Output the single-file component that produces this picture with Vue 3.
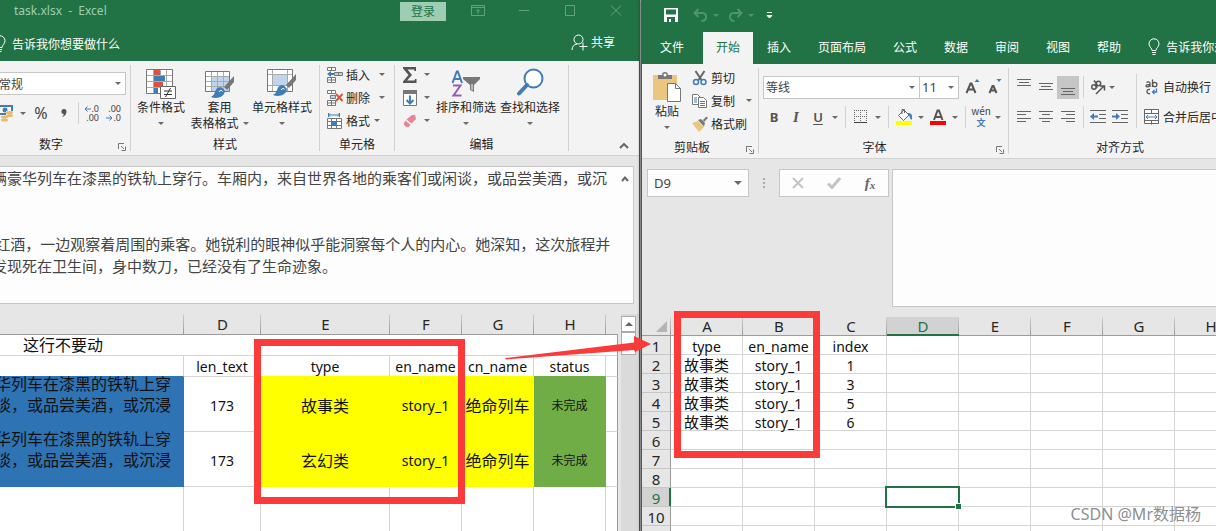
<script setup>
const formulaText = [
  '辆豪华列车在漆黑的铁轨上穿行。车厢内，来自世界各地的乘客们或闲谈，或品尝美酒，或沉',
  '',
  '',
  ' 红酒，一边观察着周围的乘客。她锐利的眼神似乎能洞察每个人的内心。她深知，这次旅程并',
  '发现死在卫生间，身中数刀，已经没有了生命迹象。',
].join('\n')

const tasks = [
  { len: 173, type: '故事类', en: 'story_1', cn: '绝命列车', status: '未完成' },
  { len: 173, type: '玄幻类', en: 'story_1', cn: '绝命列车', status: '未完成' },
]

const tabs = ['文件', '开始', '插入', '页面布局', '公式', '数据', '审阅', '视图', '帮助']
const columns = ['A', 'B', 'C', 'D', 'E', 'F', 'G', 'H', 'I']
const cells = {
  1: ['type', 'en_name', 'index'],
  2: ['故事类', 'story_1', '1'],
  3: ['故事类', 'story_1', '3'],
  4: ['故事类', 'story_1', '5'],
  5: ['故事类', 'story_1', '6'],
}
</script>

<template>
  <main class="desktop">
    <section class="window source">
      <header class="head">
        <div class="titlebar">
          <span class="doc">task.xlsx&nbsp; -&nbsp; Excel</span>
          <button class="login">登录</button>
          <button class="wbtn" aria-label="功能区显示选项">
            <svg width="14" height="12" viewBox="0 0 14 12"><path d="M.5 .5h13v10h-13zM.5 2.500h13M7 9V4.500M5 6.500l2-2 2 2" /></svg>
          </button>
          <button class="wbtn" aria-label="最小化">
            <svg width="14" height="12" viewBox="0 0 14 12"><path d="M2 5.500h10" /></svg>
          </button>
          <button class="wbtn" aria-label="最大化">
            <svg width="14" height="12" viewBox="0 0 14 12"><path d="M2.500 .5h9v10h-9z" /></svg>
          </button>
          <button class="wbtn" aria-label="关闭">
            <svg width="14" height="12" viewBox="0 0 14 12"><path d="M2 .5l10 10M12 .5l-10 10" /></svg>
          </button>
        </div>
        <div class="tellrow">
          <button class="tell">
            <svg width="12" height="18" viewBox="0 0 12 18"><path d="M4 12.500C4 10 1 9 1 5.800a5 5 0 0 1 10 0C11 9 8 10 8 12.500zM4 14.500h4M4.500 16.500h3" /></svg>
            告诉我你想要做什么
          </button>
          <button class="share">
            <svg width="17" height="17" viewBox="0 0 17 17"><circle cx="7.500" cy="5.500" r="4.500" /><path d="M1 16c0-3.500 2-5.500 5-6M12 8.500v8M8.500 12.500h8" /></svg>
            共享
          </button>
        </div>
      </header>

      <div class="ribbon">
        <div class="group g-number">
          <div class="body stack">
            <div class="combo">
              <select aria-label="数字格式"><option>常规</option></select><i class="caret"></i>
            </div>
            <div class="row">
              <button class="money" aria-label="会计数字格式">
                <svg width="18" height="18" viewBox="0 0 18 18"><path d="M0 1h17v10H0z" fill="#3f7cb8" /><path d="M2 3h13v6H2z" fill="#fff" /><circle cx="9" cy="6" r="2.500" fill="#3f7cb8" /><path d="M10 7h8v8H10z" fill="#f3f3f3" /><ellipse cx="13.500" cy="8.500" rx="3.500" ry="1.500" fill="#e9b96a" /><ellipse cx="13.500" cy="11.500" rx="3.500" ry="1.500" fill="#e9b96a" /><ellipse cx="8.500" cy="13" rx="3.500" ry="1.500" fill="#e9b96a" /><ellipse cx="8.500" cy="16" rx="3.500" ry="1.500" fill="#e9b96a" /></svg>
                <i class="caret"></i>
              </button>
              <button class="glyph" aria-label="百分比样式">%</button>
              <button class="glyph comma" aria-label="千位分隔样式"><svg width="6" height="8" viewBox="0 0 6 8"><path d="M3 0a2.500 2.500 0 0 1 2.500 2.500C5.500 5 4 7.500 1 8c1-1 1.700-2 1.700-3A2.400 2.400 0 0 1 3 0z" fill="#555" /></svg></button>
              <span class="vline"></span>
              <button class="dec" aria-label="增加小数位数">
                <span><svg width="7" height="6" viewBox="0 0 7 6"><path d="M7 3H1M3.500 .5L1 3l2.500 2.500" /></svg>.0</span><span>.00</span>
              </button>
              <button class="dec" aria-label="减少小数位数">
                <span>.00</span><span><svg width="7" height="6" viewBox="0 0 7 6"><path d="M0 3h6M3.500 .5L6 3 3.500 5.500" /></svg>.0</span>
              </button>
            </div>
          </div>
          <div class="caption">数字</div>
          <button class="launcher" aria-label="数字设置"><svg width="8" height="8" viewBox="0 0 8 8"><path d="M.5 6V.5H6M3 3l3 3M7.500 3.500v4h-4" /></svg></button>
        </div>

        <div class="group g-style">
          <div class="body">
            <button class="big w56">
              <svg width="30" height="32" viewBox="0 0 30 32"><path d="M.5 2.500h26v24H.5z" fill="#fff" stroke="#777" /><path d="M1 8.500h25M1 14.500h25M1 20.500h25M7.500 3v23M14.500 3v23M20.500 3v23" stroke="#aaa" /><path d="M8 3h6v5H8zM8 15h9v5H8z" fill="#d8553b" /><path d="M8 9h11v5H8zM8 21h4v5H8z" fill="#3f7cb8" /><path d="M14.500 19.500h15v12h-15z" fill="#fff" stroke="#666" /><path d="M18 24h8M18 27.500h8M24.500 21l-5 9" stroke="#333" fill="none" /></svg>
              <span>条件格式</span><i class="caret under"></i>
            </button>
            <button class="big w57">
              <svg width="30" height="32" viewBox="0 0 30 32"><path d="M.5 4.500h24v20H.5z" fill="#fff" stroke="#777" /><path d="M7 10h17v14H7z" fill="#c0d5ec" /><path d="M1 9.500h23M1 14.500h23M1 19.500h23M6.500 5v19M12.500 5v19M18.500 5v19" stroke="#aaa" /><path d="M29 9v6l-7 8-3-3z" fill="#777" /><path d="M17 20.500c-4-1-6 1-7 4.500-.5 2-2 4-4 5 5 2 13 1 14-6z" fill="#3f7cb8" /><path d="M14 25c1-2 3-2 3.500-.5" fill="none" stroke="#fff" /></svg>
              <span>套用</span><span>表格格式<i class="caret side"></i></span>
            </button>
            <button class="big w64">
              <svg width="30" height="32" viewBox="0 0 30 32"><path d="M.5 2.500h25v22H.5z" fill="#fff" stroke="#777" /><path d="M6 8h14v10H6z" fill="#c0d5ec" /><path d="M1 7.500h24M1 18.500h24M5.500 3v21M20.500 3v21" stroke="#aaa" /><path d="M29 7v6l-7 8-3-3z" fill="#777" /><path d="M17 18.500c-4-1-6 1-7 4.500-.5 2-2 4-4 5 5 2 13 1 14-6z" fill="#3f7cb8" /><path d="M14 23c1-2 3-2 3.500-.5" fill="none" stroke="#fff" /></svg>
              <span>单元格样式</span><i class="caret under"></i>
            </button>
          </div>
          <div class="caption">样式</div>
        </div>

        <div class="group g-cells">
          <div class="body list">
            <button class="small">
              <svg width="16" height="16" viewBox="0 0 16 16"><path d="M.5 .5h8v3h-8zM4.500 .5v3M.5 10.500h8v5h-8zM4.500 10.500v5M.5 13h8" fill="#fff" stroke="#777" /><path d="M7.500 5.500h8v3h-8zM11.500 5.500v3" fill="#c0d5ec" stroke="#777" /><path d="M0 7l4-3v2h3v2H4v2z" fill="#3f7cb8" /></svg>
              <span>插入</span><i class="caret far"></i>
            </button>
            <button class="small">
              <svg width="16" height="16" viewBox="0 0 16 16"><path d="M.5 .5h8v3h-8zM4.500 .5v3M.5 10.500h8v5h-8zM4.500 10.500v5M.5 13h8" fill="#fff" stroke="#777" /><path d="M3.500 5.500h5v3h-5z" fill="#c0d5ec" stroke="#777" /><path d="M9 4l6.500 7M15.500 4L9 11" stroke="#d8553b" stroke-width="2" /></svg>
              <span>删除</span><i class="caret far"></i>
            </button>
            <button class="small">
              <svg width="16" height="16" viewBox="0 0 16 16"><path d="M1 2h12M1.500 0v4M12.500 0v4M3 .5L1.500 2 3 3.500M11 .5L12.500 2 11 3.500" stroke="#3f7cb8" fill="none" /><path d="M.5 5.500h14v10H.5z" fill="#fff" stroke="#777" /><path d="M1 8.500h13M1 12.500h13M4.500 6v9M9.500 6v9" stroke="#777" /><path d="M4 8h6v5H4z" fill="#3f7cb8" /></svg>
              <span>格式</span><i class="caret near"></i>
            </button>
          </div>
          <div class="caption">单元格</div>
        </div>

        <div class="group g-edit">
          <div class="body">
            <div class="list tools">
              <button class="small" aria-label="自动求和"><svg width="16" height="16" viewBox="0 0 16 16"><path d="M1 0h13v4h-1.500L12 2.500H5.500L10 8l-5 5.500h7.500L13 12h1.500v4H1v-1.500L6.500 8 1 1.500z" fill="#555" /></svg><i class="caret"></i></button>
              <button class="small" aria-label="填充"><svg width="16" height="16" viewBox="0 0 16 16"><path d="M1.500 1.500h13v14h-13z" fill="#fff" stroke="#777" /><path d="M1 0h14v4H1z" fill="#777" /><path d="M8 5.500v8M4.500 10L8 13.500 11.500 10" fill="none" stroke="#3f7cb8" stroke-width="2" /></svg><i class="caret"></i></button>
              <button class="small" aria-label="清除"><svg width="16" height="16" viewBox="0 0 16 16"><path d="M10 2h3l1 4-4.500 4.500-5-4z" fill="#e8849a" /><path d="M3.500 7.500l5 4.500-2 2H4l-2.500-3z" fill="#e8849a" /></svg><i class="caret"></i></button>
            </div>
            <button class="big w64">
              <svg width="30" height="32" viewBox="0 0 30 32"><path d="M1.500 16L5.800 4.500h1L11 16M3 12h6.500" fill="none" stroke="#3f7cb8" stroke-width="2" /><path d="M2 18.500h7.500L2.500 28.500h8" fill="none" stroke="#9b59b6" stroke-width="2" /><path d="M12 10h17v2l-6 6v7l-4-2v-5l-7-6z" fill="#777" /><path d="M20.500 17v6l1 .5V17z" fill="#fff" /></svg>
              <span>排序和筛选</span><i class="caret under"></i>
            </button>
            <button class="big w64">
              <svg width="30" height="32" viewBox="0 0 30 32"><circle cx="18.500" cy="11.500" r="9" fill="#fff" stroke="#3f7cb8" stroke-width="2" /><path d="M12 18l-8 8.500" stroke="#3f7cb8" stroke-width="4" stroke-linecap="round" /></svg>
              <span>查找和选择</span><i class="caret under"></i>
            </button>
          </div>
          <div class="caption">编辑</div>
        </div>
        <button class="collapse" aria-label="折叠功能区"><svg width="10" height="6" viewBox="0 0 10 6"><path d="M1 5l4-4 4 4" /></svg></button>
      </div>

      <div class="formula">
        <div class="fbox">
          <textarea :value="formulaText" aria-label="编辑栏" spellcheck="false"></textarea>
          <button class="fold" aria-label="折叠编辑栏"><svg width="8" height="6" viewBox="0 0 8 6"><path d="M1 5l3-3.500L7 5" /></svg></button>
        </div>
      </div>

      <div class="sheet">
        <table class="grid tasks">
          <colgroup><col class="c-text" /><col class="c-len" /><col class="c-type" /><col class="c-std" /><col class="c-std" /><col class="c-std" /><col /></colgroup>
          <thead>
            <tr><th></th><th>D</th><th>E</th><th>F</th><th>G</th><th>H</th><th></th></tr>
          </thead>
          <tbody>
            <tr class="short"><td colspan="7" class="note">这行不要动</td></tr>
            <tr class="short names">
              <td class="blue-edge"></td><td>len_text</td><td class="yellow-edge">type</td><td class="yellow-edge">en_name</td><td class="yellow-edge">cn_name</td><td class="green-edge">status</td><td></td>
            </tr>
            <tr v-for="(t, i) in tasks" :key="i" class="tall">
              <td class="blue"><div>华列车在漆黑的铁轨上穿<br />谈，或品尝美酒，或沉浸</div></td>
              <td>{{ t.len }}</td>
              <td class="yellow">{{ t.type }}</td>
              <td class="yellow">{{ t.en }}</td>
              <td class="yellow tight">{{ t.cn }}</td>
              <td class="green">{{ t.status }}</td>
              <td></td>
            </tr>
            <tr class="rest"><td v-for="n in 7" :key="n"></td></tr>
          </tbody>
        </table>
        <div class="scroll">
          <button aria-label="向上滚动"><i></i></button>
          <div class="thumb"></div>
        </div>
      </div>
    </section>

    <section class="window target">
      <header class="head">
        <div class="quick">
          <button aria-label="保存"><svg width="14" height="14" viewBox="0 0 14 14"><path d="M0 0h14v14H0z" fill="#fff" /><path d="M2 1.500h10v5H2zM3 9h8v5H3z" fill="#217346" /><path d="M5 11h2v3H5z" fill="#fff" /></svg></button>
          <button class="dim undo" aria-label="撤消"><svg width="15" height="14" viewBox="0 0 15 14"><path d="M5.500 1L1.500 5l4 4M2 5h7.500c5 0 5 8-1 8" /></svg><i class="caret"></i></button>
          <button class="dim redo" aria-label="恢复"><svg width="15" height="14" viewBox="0 0 15 14"><path d="M9.500 1l4 4-4 4M13 5H5.500c-5 0-5 8 1 8" /></svg><i class="caret"></i></button>
          <button class="more" aria-label="自定义快速访问工具栏"><svg width="7" height="7" viewBox="0 0 7 7"><path d="M1 .5h5M1 3.500h5L3.500 6z" fill="#fff" stroke="#fff" /></svg></button>
        </div>
        <nav class="tabs">
          <button v-for="t in tabs" :key="t" :class="{ active: t === '开始', file: t === '文件' }">{{ t }}</button>
          <button class="tell">
            <svg width="12" height="18" viewBox="0 0 12 18"><path d="M4 12.500C4 10 1 9 1 5.800a5 5 0 0 1 10 0C11 9 8 10 8 12.500zM4 14.500h4M4.500 16.500h3" /></svg>
            告诉我你想要做什么
          </button>
        </nav>
      </header>

      <div class="ribbon">
        <div class="group g-clip">
          <div class="body">
            <button class="big w50">
              <svg width="30" height="33" viewBox="0 0 30 33"><path d="M1 5h24v25H1z" fill="#ecc57e" /><path d="M6 9V5h4a3 3 0 0 1 6 0h4v4z" fill="#777" /><circle cx="13" cy="5" r="1.500" fill="#fff" /><path d="M15.500 13.500h8l5 5v13h-13z" fill="#fff" stroke="#777" /><path d="M23.500 13.500v5h5" fill="none" stroke="#777" /></svg>
              <span>粘贴</span><i class="caret under"></i>
            </button>
            <div class="list">
              <button class="small">
                <svg width="16" height="16" viewBox="0 0 16 16"><path d="M3.500 1l6 9M12.500 1l-6 9" stroke="#666" stroke-width="2" /><circle cx="4" cy="12" r="2.500" fill="none" stroke="#3f7cb8" stroke-width="1.500" /><circle cx="11.500" cy="12" r="2.500" fill="none" stroke="#3f7cb8" stroke-width="1.500" /></svg>
                <span>剪切</span>
              </button>
              <button class="small">
                <svg width="16" height="16" viewBox="0 0 16 16"><path d="M.5 1.500h5l3 3v7h-8z" fill="#fff" stroke="#777" /><path d="M2 5h3M2 7h3M2 9h3" stroke="#3f7cb8" /><path d="M6.500 4.500h5l3 3v7h-8z" fill="#fff" stroke="#777" /><path d="M8 8.500h5M8 10.500h5M8 12.500h5" stroke="#3f7cb8" /></svg>
                <span>复制</span><i class="caret far"></i>
              </button>
              <button class="small">
                <svg width="16" height="16" viewBox="0 0 16 16"><path d="M0 7l6-2 6 6-5 5z" fill="#ecc57e" /><path d="M6 4l3-1 4 4-1 3.500z" fill="#777" /><path d="M11 4l3.500-3.500L16 2l-4 4z" fill="#777" /></svg>
                <span>格式刷</span>
              </button>
            </div>
          </div>
          <div class="caption">剪贴板</div>
          <button class="launcher" aria-label="剪贴板设置"><svg width="8" height="8" viewBox="0 0 8 8"><path d="M.5 6V.5H6M3 3l3 3M7.500 3.500v4h-4" /></svg></button>
        </div>

        <div class="group g-font">
          <div class="body stack">
            <div class="row">
              <div class="combo family"><select aria-label="字体"><option>等线</option></select><i class="caret"></i></div>
              <div class="combo size"><select aria-label="字号"><option>11</option></select><i class="caret"></i></div>
              <button class="ib grow" aria-label="增大字号"><svg width="16" height="18" viewBox="0 0 16 18"><path d="M1.500 15L5.500 5.500h1L10.500 15M3 11.500h6" fill="none" stroke="#555" stroke-width="2" /><path d="M9.500 4h5L12 1z" fill="#3f7cb8" /></svg></button>
              <button class="ib" aria-label="减小字号"><svg width="16" height="18" viewBox="0 0 16 18"><path d="M2.500 15L5.500 8h1L9.500 15M4 12.500h5" fill="none" stroke="#555" stroke-width="2" /><path d="M9.500 1h5L12 4z" fill="#3f7cb8" /></svg></button>
            </div>
            <div class="row fmt">
              <button class="ib letter bold" aria-label="加粗">B</button>
              <button class="ib letter ital" aria-label="倾斜">I</button>
              <button class="ib letter under-l" aria-label="下划线">U</button>
              <i class="caret"></i><span class="vline"></span>
              <button class="ib" aria-label="边框"><svg width="14" height="14" viewBox="0 0 14 14"><path d="M0 .5h13M0 6.500h13M.5 0v13M6.500 0v13M12.500 0v13" stroke="#666" stroke-dasharray="1 1" /><path d="M0 12.500h13" stroke="#444" /></svg></button>
              <i class="caret"></i><span class="vline"></span>
              <button class="ib" aria-label="填充颜色"><svg width="17" height="18" viewBox="0 0 17 18"><path d="M8 2l5 5-5.500 5.500-5-5z" fill="#fff" stroke="#666" /><path d="M6 6V1.500h2.500V5" fill="none" stroke="#666" /><path d="M12 5c4 0 5 3 3.500 7-2-1-1-4-3.500-5z" fill="#3f7cb8" /><path d="M0 13h16v4H0z" fill="#ff0" /></svg></button>
              <i class="caret"></i>
              <button class="ib" aria-label="字体颜色"><svg width="17" height="18" viewBox="0 0 17 18"><path d="M4 12L7.500 2.500h1.500L12.500 12M5 9h6.500" fill="none" stroke="#555" stroke-width="2" /><path d="M0 13h16v4H0z" fill="#f00" /></svg></button>
              <i class="caret"></i><span class="vline"></span>
              <button class="ib pinyin" aria-label="拼音字段"><span>wén</span><b>文</b></button>
              <i class="caret"></i>
            </div>
          </div>
          <div class="caption">字体</div>
          <button class="launcher" aria-label="字体设置"><svg width="8" height="8" viewBox="0 0 8 8"><path d="M.5 6V.5H6M3 3l3 3M7.500 3.500v4h-4" /></svg></button>
        </div>

        <div class="group g-align">
          <div class="body">
            <div class="stack">
              <div class="row">
                <button class="ib" aria-label="顶端对齐"><svg width="14" height="16" viewBox="0 0 14 16"><path d="M0 .5h14M2 3.500h10M0 6.500h14" stroke="#666" /></svg></button>
                <button class="ib" aria-label="垂直居中"><svg width="14" height="16" viewBox="0 0 14 16"><path d="M0 4.500h14M2 7.500h10M0 10.500h14" stroke="#666" /></svg></button>
                <button class="ib on" aria-label="底端对齐"><svg width="14" height="16" viewBox="0 0 14 16"><path d="M0 9.500h14M2 12.500h10M0 15.500h14" stroke="#666" /></svg></button>
                <span class="vline"></span>
                <button class="ib" aria-label="方向"><svg width="18" height="18" viewBox="0 0 18 18"><g fill="none" stroke="#555" stroke-width="1.500"><circle cx="5" cy="9" r="2.200" /><path d="M5.500 6.500l3 3" /><circle cx="9.500" cy="5.500" r="2.200" /><path d="M5 2.500l3 4M7 16l8-8M11 8h4.500v4.500" /></g></svg></button>
                <i class="caret"></i>
              </div>
              <div class="row">
                <button class="ib" aria-label="左对齐"><svg width="14" height="12" viewBox="0 0 14 12"><path d="M0 .5h14M0 3.500h9M0 7.500h14M0 10.500h9" stroke="#666" /></svg></button>
                <button class="ib" aria-label="居中"><svg width="14" height="12" viewBox="0 0 14 12"><path d="M0 .5h14M3 3.500h8M0 7.500h14M3 10.500h8" stroke="#666" /></svg></button>
                <button class="ib" aria-label="右对齐"><svg width="14" height="12" viewBox="0 0 14 12"><path d="M0 .5h14M5 3.500h9M0 7.500h14M5 10.500h9" stroke="#666" /></svg></button>
                <span class="vline"></span>
                <button class="ib" aria-label="减少缩进量"><svg width="16" height="14" viewBox="0 0 16 14"><path d="M0 .5h16M9 4.500h7M9 8.500h7M0 12.500h16" stroke="#666" /><path d="M0 6.500L4 3v2.500h4v2H4V10z" fill="#3f7cb8" /></svg></button>
                <button class="ib" aria-label="增加缩进量"><svg width="16" height="14" viewBox="0 0 16 14"><path d="M0 .5h16M9 4.500h7M9 8.500h7M0 12.500h16" stroke="#666" /><path d="M8 6.500L4 3v2.500H0v2h4V10z" fill="#3f7cb8" /></svg></button>
              </div>
            </div>
            <span class="vline long"></span>
            <div class="stack wraps">
              <button class="small">
                <svg width="16" height="16" viewBox="0 0 16 16"><g fill="none" stroke="#555"><path d="M2.500 3.500c1-1 3.500-1 3.500 1V8M6 5.500C3.500 5.500 2 6 2 7s3 1.300 4-.5M8.500 .5v7.500" stroke-width="1.300" /><circle cx="10.700" cy="5.500" r="2.200" stroke-width="1.300" /><path d="M6 10.500c-4-1-4 5 0 4" stroke-width="1.300" /></g><path d="M12.500 9.500V13H8.500M10.500 11l-2 2 2 2" fill="none" stroke="#3f7cb8" stroke-width="1.300" /></svg>
                <span>自动换行</span>
              </button>
              <button class="small">
                <svg width="16" height="16" viewBox="0 0 16 16"><path d="M.5 .5h14v14H.5zM.5 4.500h14M.5 11.500h14M7.500 .5v4M7.500 11.500v4" fill="#fff" stroke="#666" /><path d="M2 8h11M4 6L2 8l2 2M11 6l2 2-2 2" fill="none" stroke="#3f7cb8" /></svg>
                <span>合并后居中</span>
              </button>
            </div>
          </div>
          <div class="caption">对齐方式</div>
        </div>
      </div>

      <div class="formula fx">
        <div class="combo namebox"><select aria-label="名称框"><option>D9</option></select><i class="caret wide"></i></div>
        <span class="grip"><i></i><i></i><i></i></span>
        <div class="fxbtns">
          <button aria-label="取消"><svg width="12" height="12" viewBox="0 0 12 12"><path d="M1 1l10 10M11 1L1 11" stroke="#c4c4c4" stroke-width="2" /></svg></button>
          <button aria-label="输入"><svg width="14" height="12" viewBox="0 0 14 12"><path d="M1 6.500L5 10.500 13 1" fill="none" stroke="#c4c4c4" stroke-width="3" /></svg></button>
          <button class="fn" aria-label="插入函数">f<small>x</small></button>
        </div>
        <textarea class="blank" aria-label="单元格内容"></textarea>
      </div>

      <div class="sheet">
        <table class="grid result">
          <colgroup><col class="c-row" /><col v-for="c in columns" :key="c" class="c-std" /></colgroup>
          <thead>
            <tr>
              <th class="corner"><i></i></th>
              <th v-for="c in columns" :key="c" :class="{ sel: c === 'D' }">{{ c }}</th>
            </tr>
          </thead>
          <tbody>
            <tr v-for="r in 11" :key="r">
              <th :class="{ sel: r === 9 }">{{ r }}</th>
              <td v-for="(c, i) in columns" :key="c" :class="{ cursor: r === 9 && c === 'D' }">{{ cells[r] ? cells[r][i] : '' }}</td>
            </tr>
          </tbody>
        </table>
      </div>
    </section>

    <div class="mark mark-left"></div>
    <div class="mark mark-right"></div>
    <svg class="arrow" width="146" height="26" viewBox="0 0 146 26"><path d="M0 22L129 6.500 129 0 146 8 130 16 129 14 1 23.500z" fill="#fb3b3a" /></svg>
    <div class="watermark">CSDN @Mr数据杨</div>
  </main>
</template>

<style>
body { overflow: hidden; }
</style>

<style scoped>
.desktop {
  position: relative;
  display: grid;
  grid-template-columns: 10fr 9fr;
  height: 100vh;
  overflow: hidden;
  background: #b8b8b8;
  font: 12px/16px "Noto Sans CJK SC", sans-serif;
  color: #262626;
}
.desktop *, .desktop *::before, .desktop *::after { box-sizing: border-box; }
svg { display: block; flex: none; }
button {
  padding: 0; border: 0; background: none; color: inherit;
  font: inherit; white-space: nowrap;
}
.window { display: flex; flex-direction: column; min-width: 0; min-height: 0; overflow: hidden; background: #e6e6e6; }
.source { border-right: 1px solid #555; }
.target { margin-left: 1px; border-left: 1px solid #217346; box-shadow: -1px 0 3px #0006; }
.head { background: #217346; color: #fff; flex: none; }

/* title bars */
.titlebar { display: flex; height: 22px; align-items: center; padding-right: 9px; color: #9fcdb3; }
.doc { flex: 1; padding-left: 14px; font: 12px/20px "Noto Sans", sans-serif; white-space: nowrap; }
.login { width: 46px; height: 19px; margin-right: 18px; background: #9fcdb3; color: #217346; }
.wbtn { width: 28px; margin-right: 18px; display: flex; justify-content: center; }
.wbtn:last-child { margin-right: 0; }
.wbtn svg { fill: none; stroke: #64a181; }
.tellrow { display: flex; justify-content: space-between; height: 39px; padding-right: 24px; }
.tell, .share { display: flex; align-items: center; gap: 6px; }
.tellrow .tell { margin-left: -6px; height: 43px; }
.tell svg, .share svg { fill: none; stroke: #fff; }
.share { gap: 3px; height: 40px; }

.quick { display: flex; height: 32px; align-items: center; padding: 0 0 2px 22px; }
.quick button { display: flex; align-items: center; gap: 5px; }
.dim { margin-left: 15px; }
.dim svg { fill: none; stroke: #4f9470; stroke-width: 2; }
.redo { margin-left: 9px; }
.dim .caret { border-top-color: #4f9470; }
.more { margin-left: 12px; }
.tabs { display: flex; height: 32px; gap: 1px; }
.tabs button { padding: 0 13px 2px; flex: none; }
.tabs .file { width: 60px; }
.tabs .active { background: #f3f3f3; color: #217346; }

/* ribbon */
.ribbon { display: flex; flex: none; height: 95px; padding: 4px 0; background: #f3f3f3; border-bottom: 1px solid #d2d2d2; }
.group { position: relative; flex: none; height: 86px; border-right: 1px solid #d2d2d2; }
.body { display: flex; height: 70px; }
.caption { text-align: center; line-height: 18px; }
.launcher { position: absolute; right: 4px; bottom: 0; }
.launcher svg { fill: none; stroke: #777; }
.row { display: flex; align-items: center; height: 24px; }
.list { display: flex; flex-direction: column; margin-top: -2px; }
.body.list { height: 72px; }
.stack { display: flex; flex-direction: column; gap: 6px; padding-top: 7px; }
.caret { flex: none; width: 6px; height: 3px; border: 3px solid transparent; border-top-color: #6a6a6a; border-bottom: 0; }
.vline { width: 1px; height: 22px; background: #d2d2d2; flex: none; }
.big { display: flex; flex-direction: column; align-items: center; flex: none; height: 70px; padding-top: 2px; }
.big span { line-height: 16px; display: flex; align-items: center; }
.under { margin-top: 7px; }
.side { margin-left: 4px; }
.w50 { width: 50px; } .w56 { width: 56px; } .w57 { width: 59px; } .w64 { width: 64px; }
.small { display: flex; align-items: center; gap: 3px; height: 23px; }
.far { margin-left: 6px; } .near { margin-left: 1px; }

.combo { display: grid; align-items: center; height: 23px; background: #fff; border: 1px solid #c6c6c6; }
.combo > * { grid-area: 1 / 1; }
.combo .caret { justify-self: end; margin-right: 4px; pointer-events: none; }
.combo select { appearance: none; width: 100%; height: 100%; padding: 0 2px; border: 0; background: none; font: inherit; color: #444; }

.g-number { width: 131px; }
.g-number .combo { margin: 0 4px 0 -4px; }
.g-number .caption { padding-right: 28px; }
.money { display: flex; align-items: center; gap: 6px; margin-left: -4px; }
.glyph { width: 22px; margin-left: 4px; font: 16px/20px "Noto Sans", sans-serif; color: #444; }
.comma { width: 16px; display: flex; justify-content: center; }
.g-number .vline { margin: 0 4px 0 6px; }
.dec { display: flex; flex-direction: column; align-items: flex-end; width: 16px; margin-right: 6px; font: 9px/9px "Noto Sans", sans-serif; color: #444; }
.dec span { display: flex; align-items: center; height: 9px; }
.dec svg { fill: none; stroke: #3f7cb8; }
.g-style { width: 189px; }
.g-style .body { padding-left: 2px; gap: 1px; }
.g-cells { width: 75px; }
.g-cells .body, .tools { padding-left: 7px; }
.g-edit { width: 174px; }
.tools { width: 39px; }
.tools .small { gap: 6px; }
.collapse { margin: auto 10px 2px auto; }
.collapse svg, .fold svg { fill: none; stroke: #666; stroke-width: 2; }

.g-clip { width: 117px; }
.g-clip .caption { padding-right: 16px; }
.g-clip .far { margin-left: 8px; }
.g-font { width: 250px; }
.g-font .body { padding-left: 4px; }
.g-font .caption { padding-right: 18px; }
.family { flex: none; width: 157px; }
.size { flex: none; width: 40px; margin-left: -1px; }
.size select { font: 13px "Noto Sans", sans-serif; }
.ib { display: flex; align-items: center; justify-content: center; flex: none; width: 22px; height: 23px; }
.grow { margin-left: 3px; }
.letter { color: #555; font: bold 13px/16px "Noto Sans", sans-serif; }
.ital { font-style: italic; font-family: "Liberation Serif", serif; font-size: 15px; }
.under-l { text-decoration: underline; text-underline-offset: 2px; font-weight: 600; }
.fmt .vline { margin: 0 4px 0 7px; }
.fmt .ib + .caret { margin-left: 3px; }
.fmt .caret + .ib { margin-left: 3px; }
.pinyin { flex-direction: column; height: 24px; line-height: 12px; font-size: 10px; color: #444; }
.pinyin b { color: #3f7cb8; font-size: 9px; line-height: 12px; }
.g-align { border: 0; width: 222px; }
.g-align .body { padding-left: 4px; }
.on { background: #c6c6c6; }
.g-align .row .vline { margin: 0 3px 0 4px; }
.long { height: 54px; margin: 6px 7px 0 5px; }
.wraps { padding-top: 7px; gap: 7px; }

/* formula bars */
.formula { flex: none; height: 158px; padding: 10px 0; }
.source .formula { padding-right: 5px; }
.fbox { display: flex; height: 138px; background: #fdfdfd; border: 1px solid #c6c6c6; border-left: 0; }
.fbox textarea {
  flex: 1; min-width: 0; margin-left: -8px; padding: 0; border: 0; resize: none; overflow: hidden;
  background: none; white-space: pre; color: #444; font: 15px/22px "Noto Sans CJK SC", sans-serif;
}
.fold { align-self: flex-start; margin: 9px 4px 0; }
.fx { display: flex; padding-left: 5px; align-items: flex-start; }
.namebox { width: 102px; height: 28px; background: #fdfdfd; }
.namebox select { padding-left: 6px; font: 13px "Noto Sans", sans-serif; }
.namebox .caret { margin-right: 6px; }
.namebox .wide { width: 8px; height: 4px; border-width: 4px 4px 0; }
.grip { display: flex; flex-direction: column; gap: 2px; width: 30px; padding: 9px 14px; }
.grip i { width: 2px; height: 2px; background: #aaa; }
.fxbtns { display: flex; justify-content: space-around; width: 110px; height: 28px; background: #fdfdfd; border: 1px solid #c6c6c6; }
.fxbtns button { display: flex; align-items: center; justify-content: center; width: 30px; }
.fn { font: italic bold 15px/20px "Liberation Serif", serif; color: #666; }
.fn small { font-size: 11px; padding-top: 4px; }
.blank { flex: 1; height: 138px; margin-left: 3px; background: #fdfdfd; border: 1px solid #c6c6c6; border-right: 0; resize: none; }

/* sheets */
.sheet { display: flex; flex: 1; min-height: 0; overflow: hidden; }
.grid { table-layout: fixed; border-collapse: separate; border-spacing: 0; flex: none; background: #fff; color: #111; font: 14px/18px "Noto Sans", "Noto Sans CJK SC", sans-serif; text-align: center; }
.grid td, .grid th { padding: 0; border: 0 solid #d4d4d4; border-width: 0 1px 1px 0; white-space: nowrap; }
.grid thead th {
  font-weight: 400; font-size: 15px; line-height: 17px; padding-top: 1px; border-right: 0; border-bottom-color: #9b9b9b; color: #262626;
  background: linear-gradient(#d0d0d0, #999) right / 1px 100% no-repeat #e6e6e6;
}
.c-text { width: 184px; } .c-len { width: 77px; } .c-type { width: 129px; } .c-std { width: 72px; } .c-row { width: 29px; }
.tasks { flex: 1; height: 100%; }
.tasks thead th { height: 21px; }
.tasks thead th:last-child { background: #e6e6e6; }
.tasks .short td { height: 21px; line-height: 19px; }
.tasks td:last-child { border-right-color: #9b9b9b; }
.tasks .note { text-align: left; padding-left: 23px; font-size: 16px; }
.tasks .names td { padding-top: 2px; line-height: 18px; }
.tasks .blue-edge { border-bottom-color: #2e74b5; }
.tasks .yellow-edge { border-bottom-color: #ff0; }
.tasks .green-edge { border-bottom-color: #70ad47; }
.tasks .tall td { height: 55px; padding-top: 3px; }
.tasks .blue { background: #2e74b5; border-color: #2e74b5; text-align: left; vertical-align: top; font-size: 16px; line-height: 21px; }
.blue div { margin: -6px 0 0 -5px; }
.tasks .yellow { background: #ff0; border-color: #ff0; }
.tasks .yellow:nth-child(3), .tasks .tight { font-size: 16px; }
.tasks .green { background: #70ad47; border-color: #70ad47; font-size: 12px; }
.rest td { border-bottom: 0; }
.scroll { flex: none; width: 21px; padding: 2px 4px 0 3px; background: linear-gradient(90deg, #e6e6e6 3px, #dadada 3px); }
.scroll button, .thumb { display: flex; width: 15px; height: 16px; align-items: center; justify-content: center; background: #fff; border: 1px solid #ababab; }
.scroll i { border: 4px solid transparent; border-bottom: 4px solid #666; border-top: 0; }
.thumb { height: 23px; }

.result { width: 677px; align-self: flex-start; }
.result thead th { height: 19px; }
.result tbody td, .result tbody th { height: 19px; padding-top: 3px; line-height: 15px; }
.result tbody td:nth-child(2) { font-size: 15px; }
.result tbody tr:first-child td { font-size: 14px; }
.result tbody th { font-weight: 400; font-size: 15px; background: #e6e6e6; border-right-color: #9b9b9b; border-bottom-color: #c6c6c6; color: #262626; }
.result .sel { color: #217346; background-color: #d2d2d2; }
.result thead .sel { border-bottom-color: #217346; box-shadow: inset 0 -1px #217346; }
.result tbody .sel { background: #d2d2d2; color: #217346; border-right-color: #217346; box-shadow: inset -1px 0 #217346; }
.corner i { display: block; width: 11px; height: 11px; margin-left: 14px; background: #b4b4b4; clip-path: polygon(100% 0, 100% 100%, 0 100%); }
.grid .cursor { position: relative; }
.cursor::before { content: ""; position: absolute; inset: -2px; border: 2px solid #217346; }
.cursor::after { content: ""; position: absolute; right: -4px; bottom: -4px; width: 7px; height: 7px; background: #217346; border: 1px solid #fff; }

/* annotations */
.mark { position: absolute; border: 7px solid #fb3b3a; }
.mark-left { left: 254px; top: 339px; width: 211px; height: 165px; }
.mark-right { left: 674px; top: 311px; width: 146px; height: 147px; }
.arrow { position: absolute; left: 505px; top: 336px; }
.watermark { position: absolute; right: 15px; bottom: 5px; font: 16px/24px "Noto Sans", "Noto Sans CJK SC", sans-serif; color: #8f8f8f; text-shadow: 1px 1px #fff; }
</style>
